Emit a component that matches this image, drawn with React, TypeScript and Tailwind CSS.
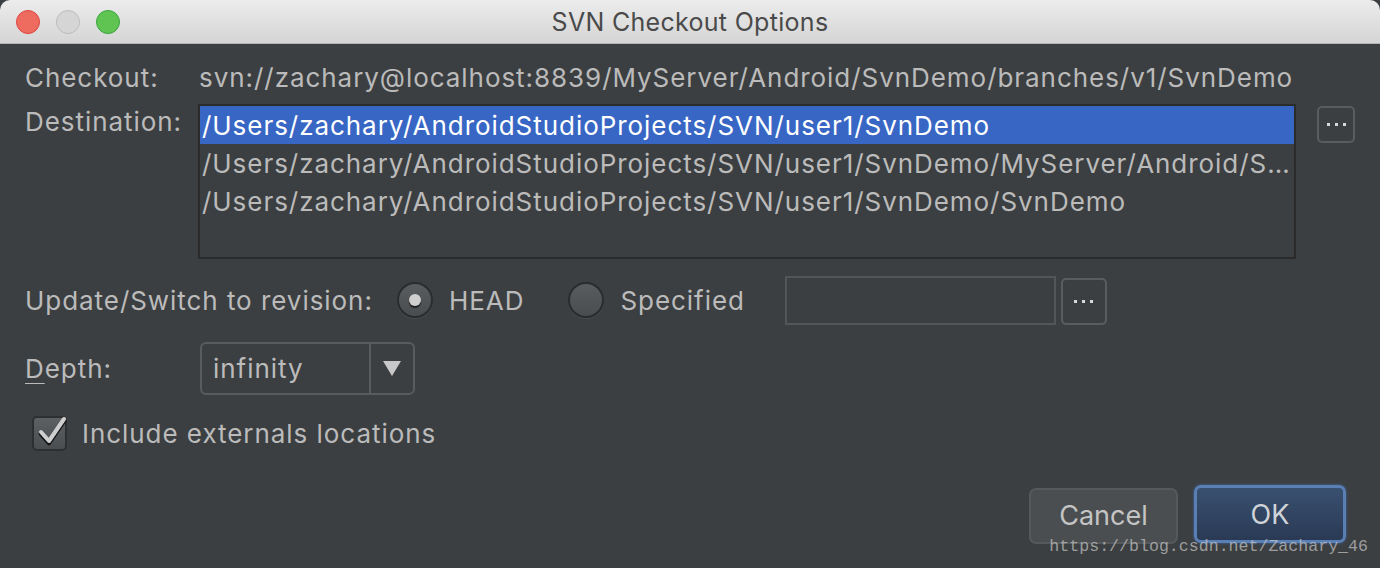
import React from 'react';

const font = { fontFamily: 'Inter, "Liberation Sans", sans-serif' };

const DotsButton: React.FC<{ className?: string }> = ({ className = '' }) => (
  <div
    className={`flex items-center justify-center gap-[5px] rounded-[5px] border-2 border-[#5a5d5f] bg-[#3c3f41] ${className}`}
  >
    <span className="h-[3px] w-[3px] bg-[#d8d8d8]" />
    <span className="h-[3px] w-[3px] bg-[#d8d8d8]" />
    <span className="h-[3px] w-[3px] bg-[#d8d8d8]" />
  </div>
);

const Radio: React.FC<{ checked?: boolean; label: string }> = ({ checked, label }) => (
  <div className="flex items-center">
    <div className="flex h-[36px] w-[36px] items-center justify-center rounded-full border-2 border-[#2a2c2d] bg-gradient-to-b from-[#5a5d60] to-[#4a4d50] shadow-[0_1px_0_#4a4d4f]">
      {checked && <div className="h-[12px] w-[12px] rounded-full bg-[#cfcfcf] shadow-[0_2px_1px_#1e1e1e]" />}
    </div>
    <span className="ml-[16px]">{label}</span>
  </div>
);

export default function App() {
  return (
    <div className="relative flex h-[568px] w-[1380px] flex-col overflow-hidden bg-[#3c3f41] text-[26px] tracking-[0.95px] text-[#bbbbbb]" style={font}>
      {/* Title bar */}
      <div className="relative flex h-[44px] shrink-0 items-center justify-center rounded-t-[10px] border-b border-[#b4b4b4] bg-gradient-to-b from-[#ececec] to-[#d5d5d5]">
        <div className="absolute left-[16px] top-[10px] flex gap-[16px]">
          <div className="h-[24px] w-[24px] rounded-full border border-[#e0443e] bg-[#ee6b60]" />
          <div className="h-[24px] w-[24px] rounded-full border border-[#bdbdbd] bg-[#d5d5d5]" />
          <div className="h-[24px] w-[24px] rounded-full border border-[#3aa43d] bg-[#60c453]" />
        </div>
        <span className="pt-[2px] text-[25px] tracking-[0.3px] text-[#4a4a4a]">SVN Checkout Options</span>
      </div>

      {/* Body */}
      <div className="flex flex-1 flex-col px-[25px] pt-[19px]">
        <div className="flex h-[30px] items-center leading-[30px]">
          <span className="w-[174px] shrink-0">Checkout:</span>
          <span className="whitespace-nowrap">svn://zachary@localhost:8839/MyServer/Android/SvnDemo/branches/v1/SvnDemo</span>
        </div>

        <div className="mt-[11px] flex items-start">
          <span className="w-[173px] shrink-0 leading-[36px]">Destination:</span>
          <div className="h-[155px] min-w-0 flex-1 border-2 border-[#2b2b2b] bg-[#3c3f41]">
            <div className="flex h-[38px] items-center bg-[#3866c4] px-[2px] text-white">
              /Users/zachary/AndroidStudioProjects/SVN/user1/SvnDemo
            </div>
            <div className="flex h-[38px] items-center pl-[2px] pr-[3px]">
              <span className="truncate">/Users/zachary/AndroidStudioProjects/SVN/user1/SvnDemo/MyServer/Android/SvnDemo/branches</span>
            </div>
            <div className="flex h-[38px] items-center px-[2px]">
              /Users/zachary/AndroidStudioProjects/SVN/user1/SvnDemo/SvnDemo
            </div>
          </div>
          <DotsButton className="ml-[21px] mt-[2px] h-[37px] w-[38px] shrink-0" />
        </div>

        <div className="mt-[16px] flex h-[50px] items-center">
          <span className="w-[372px] shrink-0">Update/Switch to revision:</span>
          <Radio checked label="HEAD" />
          <div className="ml-[44px]">
            <Radio label="Specified" />
          </div>
          <div className="ml-[40px] h-[49px] w-[271px] border-2 border-[#545556] bg-[#3c3f41]" />
          <DotsButton className="ml-[5px] mt-[3px] h-[47px] w-[46px]" />
        </div>

        <div className="mt-[17px] flex items-center">
          <span className="w-[175px] shrink-0">
            <span className="underline decoration-1 underline-offset-[5px]">D</span>epth:
          </span>
          <div className="flex h-[53px] w-[215px] items-stretch rounded-[6px] border-2 border-[#595b5d] bg-[#3c3f41]">
            <div className="flex flex-1 items-center pl-[11px]">infinity</div>
            <div className="w-[2px] bg-[#595b5d]" />
            <div className="flex w-[42px] items-center justify-center">
              <svg width="18" height="15" viewBox="0 0 18 15">
                <path d="M0 0 H18 L9 15 Z" fill="#c8c8c8" />
              </svg>
            </div>
          </div>
        </div>

        <div className="ml-[7px] mt-[19px] flex items-center">
          <div className="relative flex h-[35px] w-[35px] items-center justify-center rounded-[5px] border-2 border-[#2d2f30] bg-gradient-to-b from-[#5d6063] to-[#4b4e51]">
            <svg width="34" height="32" viewBox="0 0 34 32" className="absolute -top-[4px] left-[1px]">
              <path d="M6 18 L14 27 L29 5" fill="none" stroke="#141414" strokeWidth="4.5" strokeLinecap="round" strokeLinejoin="round" transform="translate(0 2)" />
              <path d="M6 18 L14 27 L29 5" fill="none" stroke="#cfcfcf" strokeWidth="4" strokeLinecap="round" strokeLinejoin="round" />
            </svg>
          </div>
          <span className="ml-[15px]">Include externals locations</span>
        </div>

        <div className="mb-[24px] mt-auto flex justify-end gap-[16px] pr-[9px] tracking-normal">
          <div className="flex h-[56px] w-[149px] items-center justify-center rounded-[7px] border-2 border-[#56595b] bg-[#4b4e50] text-[27px] text-[#c4c4c4]">
            Cancel
          </div>
          <div className="-mt-[3px] flex h-[58px] w-[152px] items-center justify-center rounded-[7px] border-[3px] border-[#5a7fb5] bg-gradient-to-b from-[#39506f] to-[#2a3a55] pt-[2px] text-[27px] text-[#cfd3d8] shadow-[0_0_3px_#3f6aa8]">
            OK
          </div>
        </div>
      </div>

      {/* watermark */}
      <div
        className="absolute bottom-[8px] right-[12px] text-[16.6px] tracking-normal text-[#c8c8c8]/70"
        style={{ fontFamily: '"Liberation Mono", monospace' }}
      >
        https://blog.csdn.net/Zachary_46
      </div>
    </div>
  );
}
